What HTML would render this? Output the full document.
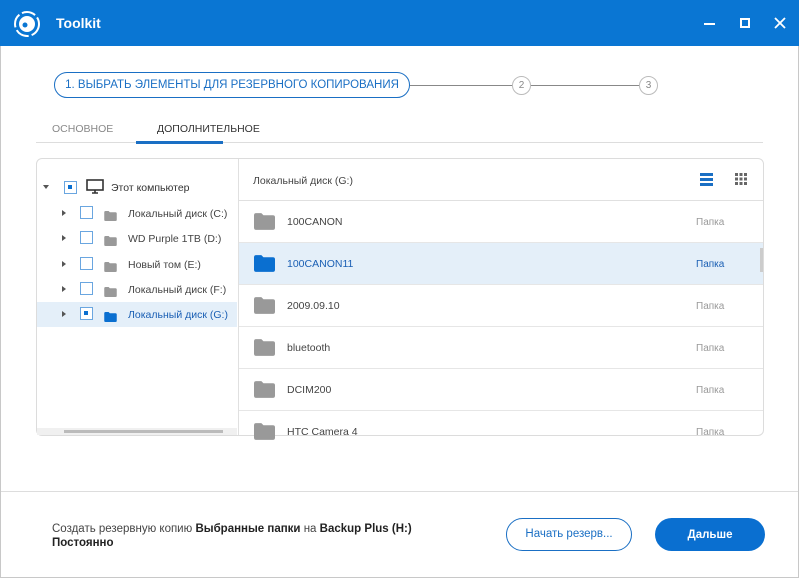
<!DOCTYPE html>
<html><head><meta charset="utf-8"><style>
*{box-sizing:border-box;margin:0;padding:0}
body{width:799px;height:578px;overflow:hidden;font-family:"Liberation Sans","DejaVu Sans",sans-serif;background:#fff;position:relative;color:#333}
.abs{position:absolute}
.title{left:0;top:0;width:799px;height:46px;background:#0a76d3}
.win{left:0;top:46px;width:799px;height:532px;border:1px solid #c8c8c8;border-top:none}
.t{font-size:11px;white-space:nowrap}
.cb{width:13px;height:13px;border:1.5px solid #6aa6e0;background:#fff}
.cb.on::after{content:"";position:absolute;left:3px;top:3px;width:4px;height:4px;background:#0a6fd0}
.arr{width:0;height:0;border-left:4px solid #555;border-top:3px solid transparent;border-bottom:3px solid transparent}
.row{left:239px;width:524px;height:42px;border-bottom:1px solid #e6e6e6}
</style></head><body>
<div class="abs title"></div>
<svg class="abs" style="left:13px;top:10px" width="28" height="28" viewBox="0 0 28 28"><circle cx="14" cy="14" r="12" fill="none" stroke="#fff" stroke-width="2" stroke-dasharray="14 3"/><circle cx="14" cy="14" r="8" fill="#fff"/><circle cx="12" cy="15" r="2.5" fill="#0a76d3"/></svg>
<div class="abs" style="left:56px;top:15px;color:#fff;font-weight:bold;font-size:14px">Toolkit</div>
<div class="abs" style="left:704px;top:23px;width:11px;height:2px;background:#fff"></div>
<div class="abs" style="left:740px;top:18px;width:10px;height:10px;border:2px solid #fff"></div>
<svg class="abs" style="left:774px;top:17px" width="12" height="12"><path d="M1 1L11 11M11 1L1 11" stroke="#fff" stroke-width="1.8"/></svg>
<div class="abs win"></div>

<div class="abs" style="left:54px;top:72px;width:356px;height:26px;border:1.5px solid #1a6fc4;border-radius:13px;color:#1a6fc4;font-size:11.5px;line-height:25px;text-align:center">1. ВЫБРАТЬ ЭЛЕМЕНТЫ ДЛЯ РЕЗЕРВНОГО КОПИРОВАНИЯ</div>
<div class="abs" style="left:410px;top:85px;width:102px;height:1px;background:#888"></div>
<div class="abs" style="left:512px;top:76px;width:19px;height:19px;border:1.5px solid #bbb;border-radius:50%;font-size:10px;color:#888;text-align:center;line-height:17px">2</div>
<div class="abs" style="left:531px;top:85px;width:108px;height:1px;background:#888"></div>
<div class="abs" style="left:639px;top:76px;width:19px;height:19px;border:1.5px solid #bbb;border-radius:50%;font-size:10px;color:#888;text-align:center;line-height:17px">3</div>

<div class="abs t" style="left:52px;top:123px;color:#888;font-size:10.5px">ОСНОВНОЕ</div>
<div class="abs t" style="left:157px;top:123px;color:#333;font-size:10.5px">ДОПОЛНИТЕЛЬНОЕ</div>
<div class="abs" style="left:36px;top:142px;width:727px;height:1px;background:#ddd"></div>
<div class="abs" style="left:136px;top:141px;width:87px;height:3px;background:#1a6fc4"></div>

<div class="abs" style="left:36px;top:158px;width:728px;height:278px;border:1px solid #dcdcdc;border-radius:6px;overflow:hidden"></div>
<div class="abs" style="left:238px;top:159px;width:1px;height:276px;background:#e0e0e0"></div>
<div class="abs" style="left:43px;top:185px;border-top:4px solid #555;border-left:3px solid transparent;border-right:3px solid transparent"></div>
<div class="abs cb on" style="left:64px;top:181px"></div>
<svg class="abs" style="left:86px;top:179px" width="18" height="16"><rect x="1" y="1" width="16" height="10" fill="none" stroke="#333" stroke-width="1.6"/><path d="M6 14h6M9 11v3" stroke="#333" stroke-width="1.6"/></svg>
<div class="abs t" style="left:111px;top:182px;font-size:10.5px">Этот компьютер</div>
<div class="abs" style="left:37px;top:302px;width:200px;height:25px;background:#e4eff9"></div>
<div id="tree"></div>
<div class="abs" style="left:37px;top:428px;width:200px;height:7px;background:#f0f0f0"></div>
<div class="abs" style="left:64px;top:430px;width:159px;height:3px;background:#bbb"></div>

<div class="abs t" style="left:253px;top:175px;font-size:10.5px;color:#444">Локальный диск (G:)</div>
<div class="abs" style="left:700px;top:173px;width:13px;height:3px;background:#1a6fc4;box-shadow:0 5px 0 #1a6fc4,0 10px 0 #1a6fc4"></div>
<svg class="abs" style="left:734px;top:172px" width="14" height="14" fill="#666"><rect x="1" y="1" width="3" height="3"/><rect x="5.5" y="1" width="3" height="3"/><rect x="10" y="1" width="3" height="3"/><rect x="1" y="5.5" width="3" height="3"/><rect x="5.5" y="5.5" width="3" height="3"/><rect x="10" y="5.5" width="3" height="3"/><rect x="1" y="10" width="3" height="3"/><rect x="5.5" y="10" width="3" height="3"/><rect x="10" y="10" width="3" height="3"/></svg>
<div class="abs" style="left:239px;top:200px;width:524px;height:1px;background:#e0e0e0"></div>
<div id="rows"></div>
<div class="abs" style="left:760px;top:248px;width:3px;height:24px;background:#ccc"></div>

<div class="abs" style="left:1px;top:491px;width:797px;height:1px;background:#ddd"></div>
<div class="abs" style="left:52px;top:522px;font-size:11.5px;line-height:14px;color:#444">Создать резервную копию <b style="color:#222">Выбранные папки</b> на <b style="color:#222">Backup Plus (H:)</b><br><b style="color:#222">Постоянно</b></div>
<div class="abs" style="left:506px;top:518px;width:126px;height:33px;border:1.5px solid #1a6fc4;border-radius:17px;color:#1a6fc4;font-size:11.5px;text-align:center;line-height:31px">Начать резерв...</div>
<div class="abs" style="left:655px;top:518px;width:110px;height:33px;background:#0a6fd0;border-radius:17px;color:#fff;font-weight:bold;font-size:11.5px;text-align:center;line-height:34px">Дальше</div>

<script>
var f=function(c,w,h){return '<svg width="'+w+'" height="'+h+'" viewBox="0 0 20 16"><path d="M0 2Q0 0 2 0H7L9 2H18Q20 2 20 4V14Q20 16 18 16H2Q0 16 0 14Z" fill="'+c+'"/></svg>'};
var tr=["Локальный диск (C:)","WD Purple 1TB (D:)","Новый том (E:)","Локальный диск (F:)","Локальный диск (G:)"],h="";
tr.forEach(function(n,i){var y=213+i*25.3,s=i==4;
h+='<div class="abs arr" style="left:62px;top:'+(y-3)+'px"></div><div class="abs cb'+(s?' on':'')+'" style="left:80px;top:'+(y-7)+'px"></div><div class="abs" style="left:104px;top:'+(y-5)+'px">'+f(s?'#0a6fd0':'#999',13,10)+'</div><div class="abs t" style="left:128px;top:'+(y-5)+'px;font-size:10.5px;color:'+(s?'#1a5fb4':'#444')+'">'+n+'</div>';});
document.getElementById('tree').innerHTML=h;
var r=["100CANON","100CANON11","2009.09.10","bluetooth","DCIM200","HTC Camera 4"];h="";
r.forEach(function(n,i){var y=201+i*42,s=i==1;
h+='<div class="abs row" style="top:'+y+'px;height:'+(i==5?26:42)+'px;'+(s?'background:#e4eff9;':'')+(i==5?'border:none;':'')+'"></div><div class="abs" style="left:254px;top:'+(y+12)+'px">'+f(s?'#0a6fd0':'#999',21,17)+'</div><div class="abs t" style="left:287px;top:'+(y+15)+'px;font-size:10.5px;color:'+(s?'#1a5fb4':'#444')+'">'+n+'</div><div class="abs t" style="left:696px;top:'+(y+16)+'px;font-size:10px;color:'+(s?'#1a5fb4':'#999')+'">Папка</div>';});
document.getElementById('rows').innerHTML=h;
</script>
</body></html>
